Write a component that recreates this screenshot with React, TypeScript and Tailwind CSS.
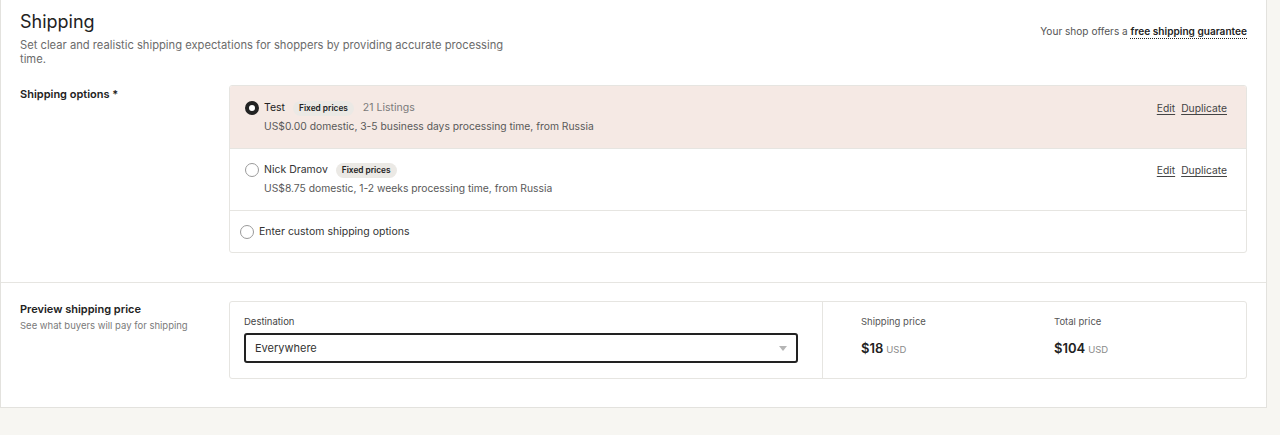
import React from "react";

const font = { fontFamily: "Inter, 'Noto Sans', sans-serif" };

function Radio({ checked }: { checked?: boolean }) {
  return checked ? (
    <span className="box-border inline-block h-[14px] w-[14px] shrink-0 rounded-full border-[4px] border-[#222222] bg-white" />
  ) : (
    <span className="box-border inline-block h-[14px] w-[14px] shrink-0 rounded-full border border-[#9a9a9a] bg-white" />
  );
}

function Badge() {
  return (
    <span className="inline-flex h-[15px] items-center rounded-full bg-[#ebe9e5] px-[6px] text-[8.3px] font-semibold text-[#222222]">
      Fixed prices
    </span>
  );
}

function Actions() {
  return (
    <div className="flex gap-[6px] text-[10.3px] text-[#444444]">
      <span className="underline underline-offset-2">Edit</span>
      <span className="underline underline-offset-2">Duplicate</span>
    </div>
  );
}

export default function App() {
  return (
    <div className="h-[435px] w-[1280px] overflow-hidden bg-[#f7f6f2]" style={font}>
      <div className="w-[1267px] border-r border-b border-l border-[#e3e2de] bg-white">
        {/* top section */}
        <div className="px-[19px] pb-[29px] pt-[10px]">
          <div className="flex items-start justify-between">
            <div className="max-w-[500px]">
              <h1 className="text-[18px] leading-[24px] text-[#222222]">Shipping</h1>
              <p className="mt-[4px] text-[11.2px] leading-[14px] text-[#6b6b6b]">
                Set clear and realistic shipping expectations for shoppers by providing accurate processing time.
              </p>
            </div>
            <div className="mt-[14px] text-[10.1px] text-[#555555]">
              Your shop offers a{" "}
              <span className="font-semibold text-[#222222] underline decoration-dotted underline-offset-[3px]">
                free shipping guarantee
              </span>
            </div>
          </div>

          <div className="mt-[19px] flex">
            <div className="w-[209px] shrink-0 pt-[1px] text-[11px] font-semibold text-[#222222]">
              Shipping options *
            </div>
            <div className="flex-1 overflow-hidden rounded-[3px] border border-[#e6e5e1]">
              <div className="flex items-start justify-between bg-[#f5e9e4] pb-[15px] pl-[15px] pr-[19px] pt-[15px]">
                <div>
                  <div className="flex h-[14px] items-center gap-[5px] text-[10.5px]">
                    <Radio checked />
                    <span className="text-[#222222]">Test</span>
                    <span className="ml-[3px]">
                      <Badge />
                    </span>
                    <span className="ml-[4px] text-[#7a7a7a]">21 Listings</span>
                  </div>
                  <div className="ml-[19px] mt-[4px] text-[10.3px] leading-[14px] text-[#595959]">
                    US$0.00 domestic, 3-5 business days processing time, from Russia
                  </div>
                </div>
                <Actions />
              </div>
              <div className="flex items-start justify-between border-t border-[#e6e5e1] pb-[15px] pl-[15px] pr-[19px] pt-[14px]">
                <div>
                  <div className="flex h-[14px] items-center gap-[5px] text-[10.5px]">
                    <Radio />
                    <span className="text-[#333333]">Nick Dramov</span>
                    <span className="ml-[3px]">
                      <Badge />
                    </span>
                  </div>
                  <div className="ml-[19px] mt-[4px] text-[10.3px] leading-[14px] text-[#595959]">
                    US$8.75 domestic, 1-2 weeks processing time, from Russia
                  </div>
                </div>
                <Actions />
              </div>
              <div className="flex h-[42px] items-center gap-[5px] border-t border-[#e6e5e1] pl-[10px] text-[10.5px] text-[#333333]">
                <Radio />
                <span>Enter custom shipping options</span>
              </div>
            </div>
          </div>
        </div>

        {/* preview section */}
        <div className="flex border-t border-[#e6e5e1] px-[19px] pb-[28px] pt-[18px]">
          <div className="w-[209px] shrink-0 pt-[1px]">
            <div className="text-[11px] font-semibold leading-[14px] text-[#222222]">Preview shipping price</div>
            <div className="mt-[4px] text-[9.5px] leading-[12px] text-[#7a7a7a]">See what buyers will pay for shipping</div>
          </div>
          <div className="flex flex-1 rounded-[3px] border border-[#e6e5e1]">
            <div className="w-[593px] border-r border-[#e6e5e1] pb-[15px] pl-[14px] pr-[24px] pt-[14px]">
              <div className="text-[9.5px] leading-[12px] text-[#444444]">Destination</div>
              <div className="mt-[5px] flex h-[30px] items-center justify-between rounded-[3px] border-2 border-[#222222] pl-[9px] pr-[9px] text-[11px] text-[#333333]">
                <span>Everywhere</span>
                <svg width="8" height="5" viewBox="0 0 8 5">
                  <path d="M0 0 L8 0 L4 5 Z" fill="#b5b5b5" />
                </svg>
              </div>
            </div>
            <div className="flex flex-1 pl-[38px] pt-[14px]">
              <div className="w-[193px]">
                <div className="text-[9.5px] leading-[12px] text-[#555555]">Shipping price</div>
                <div className="mt-[11px] flex items-baseline gap-[3px]">
                  <span className="text-[13px] font-semibold text-[#222222]">$18</span>
                  <span className="text-[9.5px] text-[#8a8a8a]">USD</span>
                </div>
              </div>
              <div>
                <div className="text-[9.5px] leading-[12px] text-[#555555]">Total price</div>
                <div className="mt-[11px] flex items-baseline gap-[3px]">
                  <span className="text-[13px] font-semibold text-[#222222]">$104</span>
                  <span className="text-[9.5px] text-[#8a8a8a]">USD</span>
                </div>
              </div>
            </div>
          </div>
        </div>
      </div>
    </div>
  );
}
